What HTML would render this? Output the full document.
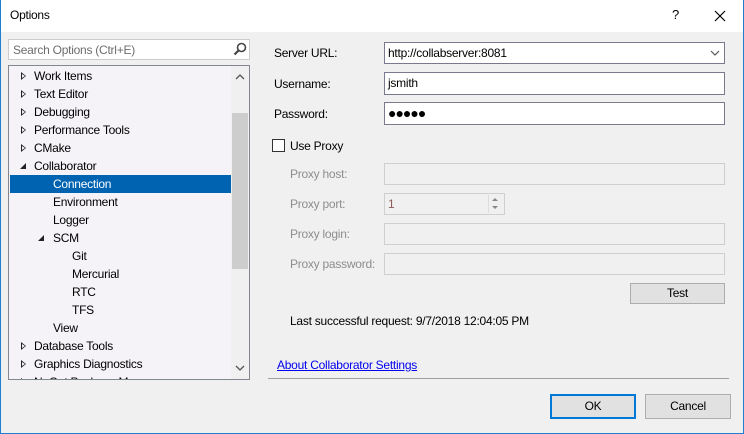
<!DOCTYPE html>
<html><head><style>
*{box-sizing:border-box;margin:0;padding:0}
body{width:744px;height:434px;position:relative;background:#f0f0f0;font-family:"Liberation Sans",sans-serif;font-size:12px;letter-spacing:-0.25px;color:#000;overflow:hidden}
.a{position:absolute}
.win{left:0;top:0;width:744px;height:434px;border:1px solid #1c7fd4;border-top:none}
.title{left:0;top:0;width:744px;height:32px;background:#fff}
.inp{position:absolute;background:#fff;border:1px solid #7a7a8e;padding:3px 0 0 3px}
.dis{position:absolute;background:#f0f0f0;border:1px solid #cfcfcf}
.lbl{position:absolute;left:274px}
.g{color:#8d8d8d}
.row{position:absolute;height:18px;line-height:18px;white-space:nowrap}
.tri{position:absolute;left:12px;top:5px;width:0;height:0;border-left:5px solid #222;border-top:4px solid transparent;border-bottom:4px solid transparent}
.tri:after{content:"";position:absolute;left:-4px;top:-2px;border-left:3px solid #f5f3f8;border-top:2px solid transparent;border-bottom:2px solid transparent}
.btn{position:absolute;background:#e1e1e1;border:1px solid #adadad;text-align:center}
</style></head><body>
<div class="a title"></div>
<div class="a" style="left:10px;top:8px;font-size:12px">Options</div>
<div class="a" style="left:672px;top:7px;font-size:13px">?</div>
<svg class="a" style="left:714px;top:10px" width="12" height="12"><path d="M1 1L11 11M11 1L1 11" stroke="#000" stroke-width="1.2"/></svg>
<div class="a win"></div>

<div class="a" style="left:8px;top:39px;width:242px;height:21px;background:#fff;border:1px solid #ccc"></div>
<div class="a" style="left:13px;top:43px;color:#6d6d6d">Search Options (Ctrl+E)</div>
<svg class="a" style="left:233px;top:42px" width="14" height="14"><circle cx="8.5" cy="5.5" r="4" fill="none" stroke="#444" stroke-width="1.6"/><path d="M5.5 8.5L1.5 12.5" stroke="#444" stroke-width="2.2"/></svg>

<div class="a" style="left:8px;top:65px;width:242px;height:315px;background:#f5f3f8;border:1px solid #828790;overflow:hidden">
 <div class="a" style="left:222px;top:0;width:18px;height:313px;background:#f0f0f0"></div>
 <div class="a" style="left:223px;top:47px;width:16px;height:156px;background:#cdcdcd"></div>
 <svg class="a" style="left:226px;top:8px" width="10" height="6"><path d="M1 5L5 1L9 5" fill="none" stroke="#555" stroke-width="1.3"/></svg>
 <svg class="a" style="left:226px;top:299px" width="10" height="6"><path d="M1 1L5 5L9 1" fill="none" stroke="#555" stroke-width="1.3"/></svg>
 <div class="row" style="left:0;top:1px;width:222px"><span class="tri"></span><span style="margin-left:25px">Work Items</span></div>
 <div class="row" style="left:0;top:19px"><span class="tri"></span><span style="margin-left:25px">Text Editor</span></div>
 <div class="row" style="left:0;top:37px"><span class="tri"></span><span style="margin-left:25px">Debugging</span></div>
 <div class="row" style="left:0;top:55px"><span class="tri"></span><span style="margin-left:25px">Performance Tools</span></div>
 <div class="row" style="left:0;top:73px"><span class="tri"></span><span style="margin-left:25px">CMake</span></div>
 <div class="row" style="left:0;top:91px"><svg class="a" style="left:11px;top:6px" width="7" height="7"><path d="M6 0L6 6L0 6Z" fill="#222"/></svg><span style="margin-left:25px">Collaborator</span></div>
 <div class="row" style="left:1px;top:109px;width:221px;background:#0063b1;color:#fff"><span style="margin-left:43px">Connection</span></div>
 <div class="row" style="left:0;top:127px"><span style="margin-left:44px">Environment</span></div>
 <div class="row" style="left:0;top:145px"><span style="margin-left:44px">Logger</span></div>
 <div class="row" style="left:0;top:163px"><svg class="a" style="left:29px;top:6px" width="7" height="7"><path d="M6 0L6 6L0 6Z" fill="#222"/></svg><span style="margin-left:44px">SCM</span></div>
 <div class="row" style="left:0;top:181px"><span style="margin-left:63px">Git</span></div>
 <div class="row" style="left:0;top:199px"><span style="margin-left:63px">Mercurial</span></div>
 <div class="row" style="left:0;top:217px"><span style="margin-left:63px">RTC</span></div>
 <div class="row" style="left:0;top:235px"><span style="margin-left:63px">TFS</span></div>
 <div class="row" style="left:0;top:253px"><span style="margin-left:44px">View</span></div>
 <div class="row" style="left:0;top:271px"><span class="tri"></span><span style="margin-left:25px">Database Tools</span></div>
 <div class="row" style="left:0;top:289px"><span class="tri"></span><span style="margin-left:25px">Graphics Diagnostics</span></div>
 <div class="row" style="left:0;top:307px"><span class="tri"></span><span style="margin-left:25px">NuGet Package Manager</span></div>
</div>

<div class="lbl" style="top:46px">Server URL:</div>
<div class="inp" style="left:384px;top:42px;width:341px;height:22px">http://collabserver:8081</div>
<svg class="a" style="left:710px;top:50px" width="10" height="6"><path d="M1 1L5 5L9 1" fill="none" stroke="#555" stroke-width="1.2"/></svg>
<div class="lbl" style="top:77px">Username:</div>
<div class="inp" style="left:384px;top:72px;width:341px;height:23px">jsmith</div>
<div class="lbl" style="top:107px">Password:</div>
<div class="inp" style="left:384px;top:102px;width:341px;height:23px;font-size:14px;line-height:14px;letter-spacing:-1px;padding-top:3px">●●●●●</div>

<div class="a" style="left:272px;top:139px;width:13px;height:13px;background:#fff;border:1px solid #333"></div>
<div class="a" style="left:290px;top:139px">Use Proxy</div>

<div class="a g" style="left:290px;top:167px">Proxy host:</div>
<div class="dis" style="left:384px;top:163px;width:341px;height:22px"></div>
<div class="a g" style="left:290px;top:197px">Proxy port:</div>
<div class="dis" style="left:384px;top:193px;width:121px;height:22px;color:#8d5a5a;padding:3px 0 0 3px">1</div>
<div class="a" style="left:488px;top:195px;width:15px;height:18px;background:#f0f0f0;border-left:1px solid #ddd"></div>
<svg class="a" style="left:491px;top:197px" width="8" height="14"><path d="M1 4L4 1L7 4Z M1 9L4 12L7 9Z" fill="#888"/></svg>
<div class="a g" style="left:290px;top:227px">Proxy login:</div>
<div class="dis" style="left:384px;top:223px;width:341px;height:22px"></div>
<div class="a g" style="left:290px;top:257px">Proxy password:</div>
<div class="dis" style="left:384px;top:253px;width:341px;height:22px"></div>

<div class="btn" style="left:630px;top:283px;width:95px;height:21px;line-height:19px">Test</div>
<div class="a" style="left:290px;top:314px">Last successful request: 9/7/2018 12:04:05 PM</div>
<div class="a" style="left:277px;top:358px;color:#0000ee;text-decoration:underline">About Collaborator Settings</div>
<div class="a" style="left:268px;top:378px;width:461px;height:1px;background:#a0a0a0"></div>

<div class="btn" style="left:550px;top:394px;width:86px;height:25px;line-height:21px;border:2px solid #0078d7">OK</div>
<div class="btn" style="left:645px;top:394px;width:86px;height:25px;line-height:23px">Cancel</div>
</body></html>
